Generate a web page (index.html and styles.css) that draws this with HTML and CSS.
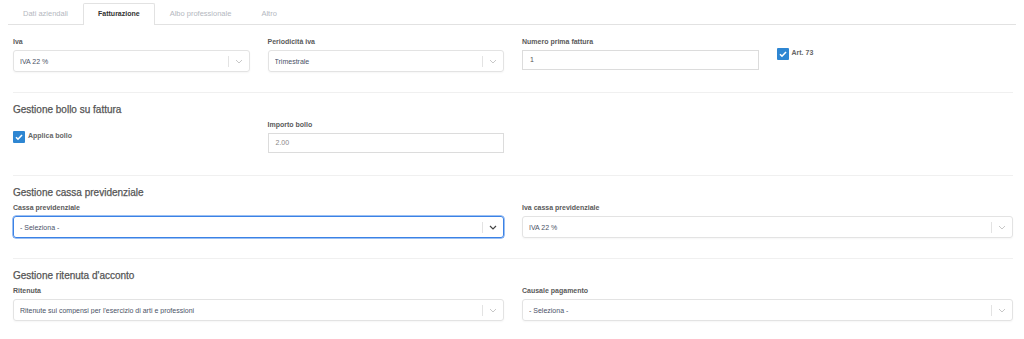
FILE: index.html
```html
<!DOCTYPE html>
<html lang="it">
<head>
    <meta charset="UTF-8">
    <title>Fatturazione</title>
    <link rel="stylesheet" href="styles.css">
</head>
<body>
    <div class="page">
        <!-- Tabs -->
        <ul class="tabs">
            <li class="tab">Dati aziendali</li>
            <li class="tab active">Fatturazione</li>
            <li class="tab">Albo professionale</li>
            <li class="tab">Altro</li>
        </ul>

        <div class="form">
            <!-- Iva -->
            <div class="section first">
                <div class="row">
                    <div class="field">
                        <label class="label">Iva</label>
                        <div class="select">
                            <span class="select-value">IVA 22 %</span>
                            <span class="select-sep"></span>
                            <svg class="chevron" width="8" height="5" viewBox="0 0 8 5"><path d="M1 1l3 3 3-3" fill="none" stroke="#c8c8c8" stroke-width="1"/></svg>
                        </div>
                    </div>
                    <div class="field">
                        <label class="label">Periodicità iva</label>
                        <div class="select">
                            <span class="select-value">Trimestrale</span>
                            <span class="select-sep"></span>
                            <svg class="chevron" width="8" height="5" viewBox="0 0 8 5"><path d="M1 1l3 3 3-3" fill="none" stroke="#c8c8c8" stroke-width="1"/></svg>
                        </div>
                    </div>
                    <div class="field">
                        <label class="label">Numero prima fattura</label>
                        <div class="input">1</div>
                    </div>
                    <div class="field check-field">
                        <span class="check">
                            <svg width="12" height="12" viewBox="0 0 12 12"><path d="M3 6.2l2 2 4-4.2" fill="none" stroke="#fff" stroke-width="1.6"/></svg>
                        </span>
                        <span class="check-label">Art. 73</span>
                    </div>
                </div>
            </div>

            <!-- Bollo -->
            <div class="section">
                <h3 class="section-title">Gestione bollo su fattura</h3>
                <div class="row">
                    <div class="field check-field">
                        <span class="check">
                            <svg width="12" height="12" viewBox="0 0 12 12"><path d="M3 6.2l2 2 4-4.2" fill="none" stroke="#fff" stroke-width="1.6"/></svg>
                        </span>
                        <span class="check-label">Applica bollo</span>
                    </div>
                    <div class="field">
                        <label class="label">Importo bollo</label>
                        <div class="input muted">2.00</div>
                    </div>
                </div>
            </div>

            <!-- Cassa previdenziale -->
            <div class="section">
                <h3 class="section-title">Gestione cassa previdenziale</h3>
                <div class="row">
                    <div class="field wide">
                        <label class="label">Cassa previdenziale</label>
                        <div class="select focused">
                            <span class="select-value">- Seleziona -</span>
                            <span class="select-sep"></span>
                            <svg class="chevron" width="8" height="5" viewBox="0 0 8 5"><path d="M1 1l3 3 3-3" fill="none" stroke="#444" stroke-width="1.2"/></svg>
                        </div>
                    </div>
                    <div class="field wide">
                        <label class="label">Iva cassa previdenziale</label>
                        <div class="select">
                            <span class="select-value">IVA 22 %</span>
                            <span class="select-sep"></span>
                            <svg class="chevron" width="8" height="5" viewBox="0 0 8 5"><path d="M1 1l3 3 3-3" fill="none" stroke="#c8c8c8" stroke-width="1"/></svg>
                        </div>
                    </div>
                </div>
            </div>

            <!-- Ritenuta -->
            <div class="section last">
                <h3 class="section-title">Gestione ritenuta d'acconto</h3>
                <div class="row">
                    <div class="field wide">
                        <label class="label">Ritenuta</label>
                        <div class="select">
                            <span class="select-value">Ritenute sui compensi per l'esercizio di arti e professioni</span>
                            <span class="select-sep"></span>
                            <svg class="chevron" width="8" height="5" viewBox="0 0 8 5"><path d="M1 1l3 3 3-3" fill="none" stroke="#c8c8c8" stroke-width="1"/></svg>
                        </div>
                    </div>
                    <div class="field wide">
                        <label class="label">Causale pagamento</label>
                        <div class="select">
                            <span class="select-value">- Seleziona -</span>
                            <span class="select-sep"></span>
                            <svg class="chevron" width="8" height="5" viewBox="0 0 8 5"><path d="M1 1l3 3 3-3" fill="none" stroke="#c8c8c8" stroke-width="1"/></svg>
                        </div>
                    </div>
                </div>
            </div>
        </div>
    </div>
</body>
</html>
```

FILE: styles.css
```css
body {
    margin: 0;
    font-family: "Liberation Sans", Arial, sans-serif;
    background-color: #fff;
    color: #444;
}
.page {
    padding: 0 8px;
}
.tabs {
    display: flex;
    list-style: none;
    margin: 0;
    padding: 3px 0 0 0;
    border-bottom: 1px solid #e2e2e2;
}
.tab {
    padding: 0 14px;
    height: 20px;
    line-height: 20px;
    font-size: 7.5px;
    color: #b4b8c0;
    border: 1px solid transparent;
    border-bottom: none;
    margin-bottom: -1px;
}
.tab.active {
    color: #333;
    font-size: 7px;
    font-weight: bold;
    background-color: #fff;
    border-color: #e2e2e2;
    border-radius: 2px 2px 0 0;
    height: 21px;
}
.form {
    padding: 0 3px 0 5px;
}
.section {
    padding: 11px 0 20px;
    border-bottom: 1px solid #f0f0f0;
}
.section.first {
    padding-top: 13px;
}
.section.last {
    border-bottom: none;
}
.section-title {
    margin: 0 0 5px;
    font-size: 10px;
    line-height: 12px;
    font-weight: normal;
    color: #555;
    -webkit-text-stroke: 0.25px #555;
}
.row {
    display: grid;
    grid-template-columns: repeat(4, 1fr);
    column-gap: 18px;
}
.field.wide {
    grid-column: span 2;
}
.label {
    display: block;
    font-size: 7px;
    line-height: 8px;
    font-weight: bold;
    color: #5a5a5a;
    margin-bottom: 4px;
}
.select {
    display: flex;
    align-items: center;
    height: 22px;
    box-sizing: border-box;
    border: 1px solid #e3e3e3;
    border-radius: 3px;
    box-shadow: 0 1px 2px rgba(0, 0, 0, 0.04);
    padding-left: 6px;
}
.select.focused {
    border-color: #3b82e6;
    box-shadow: 0 0 0 0.5px #3b82e6;
}
.select-value {
    flex: 1;
    font-size: 7px;
    color: #4a5266;
    white-space: nowrap;
    overflow: hidden;
}
.select-sep {
    width: 1px;
    height: 11px;
    background-color: #e3e3e3;
}
.chevron {
    margin: 0 6px;
}
.input {
    height: 20px;
    box-sizing: border-box;
    border: 1px solid #dcdcdc;
    padding-left: 7px;
    font-size: 7px;
    line-height: 18px;
    color: #555;
    margin-bottom: 2px;
}
.input.muted {
    color: #888;
}
.check-field {
    display: flex;
    align-items: flex-start;
    padding-top: 10px;
}
.check {
    display: inline-flex;
    width: 12px;
    height: 12px;
    background-color: #2e86d2;
    border-radius: 1px;
    margin-right: 3px;
}
.check-label {
    font-size: 7px;
    line-height: 10px;
    font-weight: bold;
    color: #666;
}
```
